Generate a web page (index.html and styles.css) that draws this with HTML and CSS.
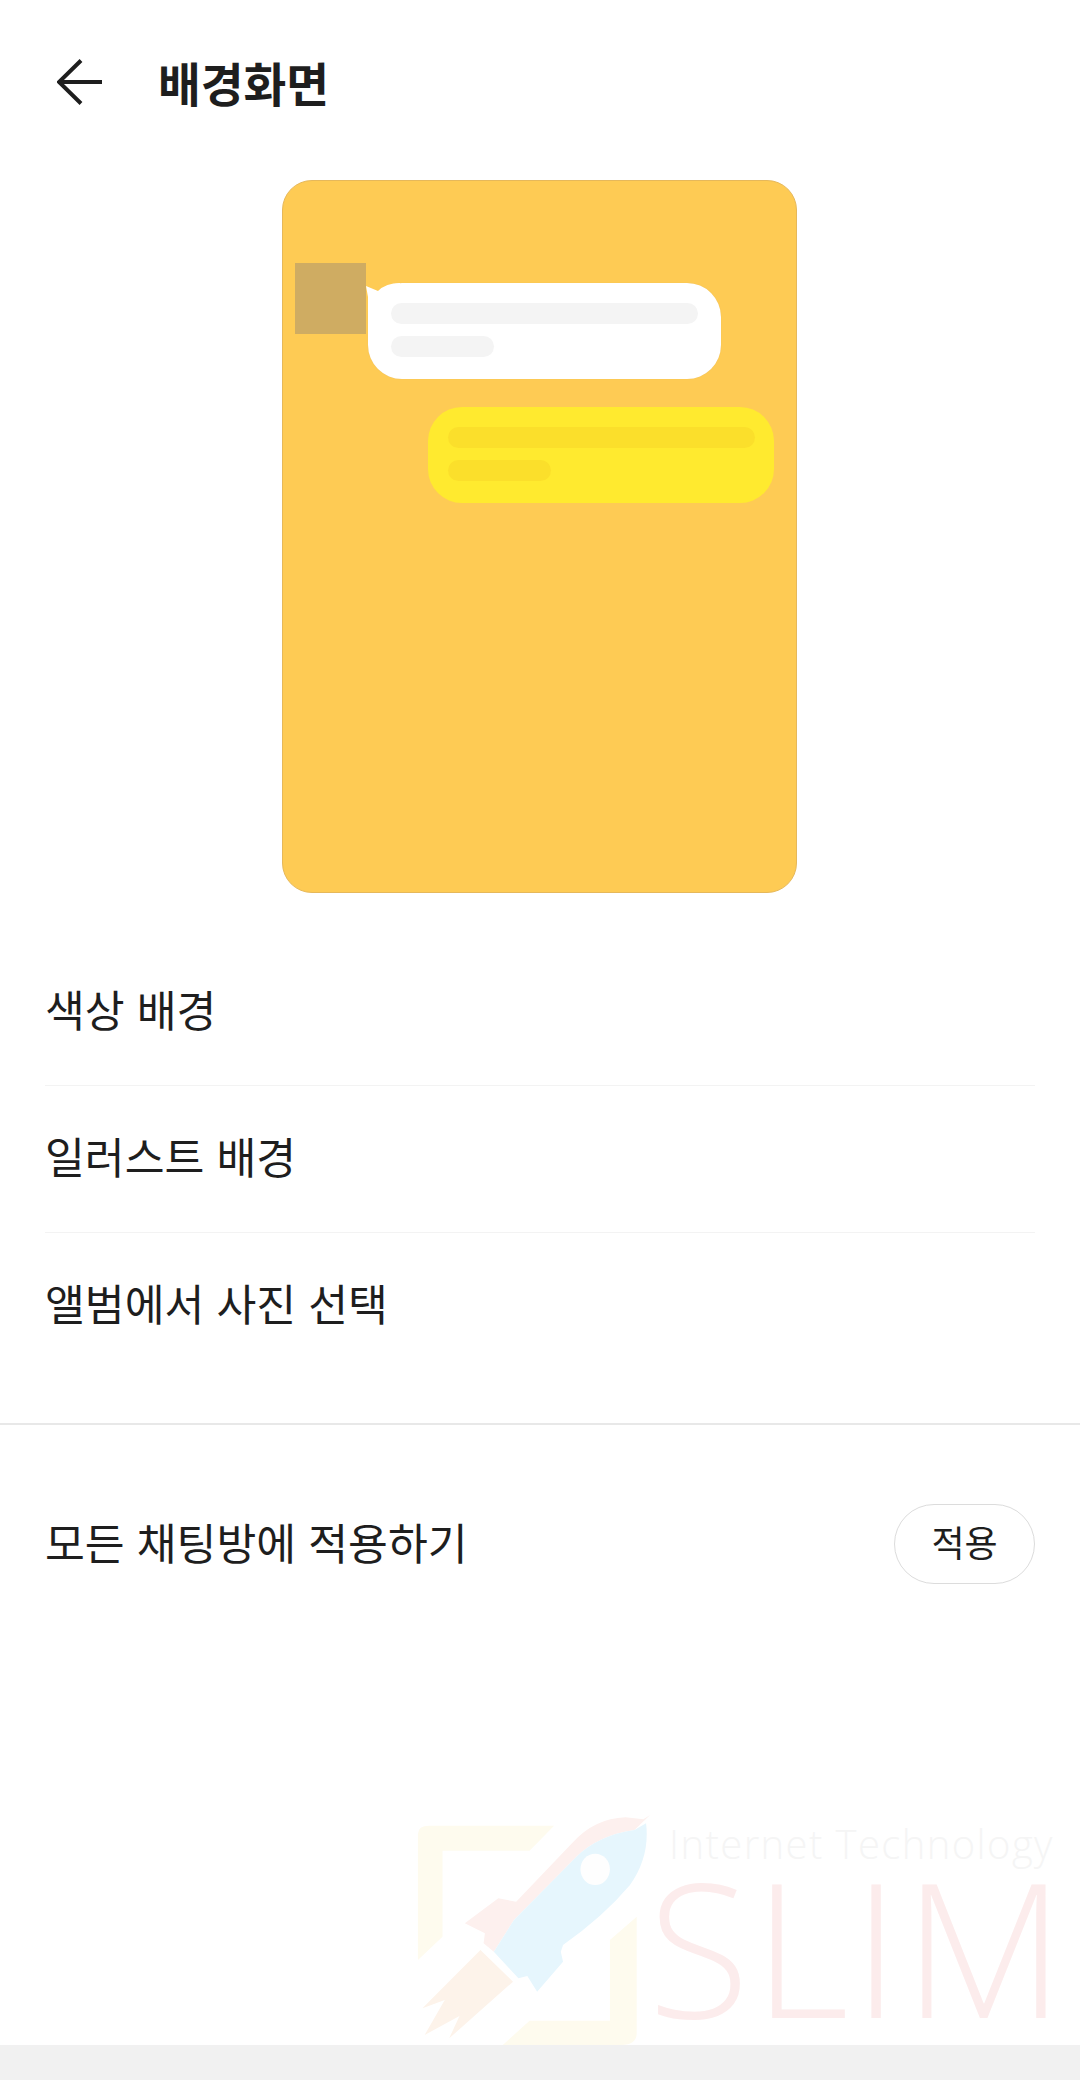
FILE: index.html
```html
<!DOCTYPE html>
<html lang="ko">
<head>
    <meta charset="UTF-8">
    <meta name="viewport" content="width=device-width, initial-scale=1.0">
    <title>배경화면</title>
    <link rel="stylesheet" href="styles.css">
</head>
<body>
    <div class="header">
        <svg class="back-icon" width="46" height="46" viewBox="0 0 46 46">
            <path d="M45 23H2M24 1.500L2 23l22 21.500" fill="none" stroke="#1e1e1e" stroke-width="4"/>
        </svg>
        <h1>배경화면</h1>
    </div>

    <div class="preview">
        <div class="chat-row">
            <div class="avatar"></div>
            <div class="bubble bubble-white">
                <svg class="tail" width="36" height="36" viewBox="0 0 36 36">
                    <path d="M0 3L12 8Q20 0 34 0V36H2V14Z" fill="#fff"/>
                </svg>
                <div class="line line-long"></div>
                <div class="line line-short"></div>
            </div>
        </div>
        <div class="bubble bubble-yellow">
            <div class="line line-long"></div>
            <div class="line line-short"></div>
        </div>
    </div>

    <div class="menu">
        <div class="menu-item">색상 배경</div>
        <div class="menu-item">일러스트 배경</div>
        <div class="menu-item">앨범에서 사진 선택</div>
    </div>

    <div class="apply-row">
        <span>모든 채팅방에 적용하기</span>
        <button type="button">적용</button>
    </div>

    <div class="footer"></div>

    <!-- 워터마크 -->
    <div class="watermark">
        <svg width="700" height="285" viewBox="0 0 1568 855" preserveAspectRatio="none">
            <path d="M85 600V222Q85 197 110 197H390L335 272H140V530Z" fill="#fefbee"/>
            <path d="M575 470V820Q575 855 540 855H275L335 782H515V540Z" fill="#fefbee"/>
            <path d="M225 570L298 665 155 835 178 768 100 825 145 720 95 745Z" fill="#fdf3ea"/>
            <path d="M605 165L570 210Q490 225 440 290L300 480 255 575 232 550 235 520 190 490 265 415 305 425 430 250Q480 175 550 172L590 178Z" fill="#fdf0ee"/>
            <path d="M596 190Q605 290 560 375 500 470 410 555L405 575 410 605 352 695 330 648 310 655 255 575 300 480 440 290Q490 225 570 210Z" fill="#e6f6fd"/>
            <ellipse cx="482" cy="328" rx="33" ry="47" fill="#fefefe"/>
        </svg>
        <div class="wm-sub">Internet Technology</div>
        <div class="wm-name">SLIM</div>
    </div>
</body>
</html>
```

FILE: styles.css
```css
body {
    font-family: "Noto Sans CJK KR", "Noto Sans", sans-serif;
    background-color: #fff;
    color: #1e1e1e;
    margin: 0;
    padding: 0;
    height: 2080px;
    display: flex;
    flex-direction: column;
    position: relative;
    overflow: hidden;
}
.header {
    height: 164px;
    display: flex;
    align-items: center;
    padding-left: 57px;
    gap: 55px;
}
.header h1 {
    margin: 0 0 2px;
    font-size: 46.500px;
    font-weight: 700;
}
.back-icon {
    flex-shrink: 0;
}
.preview {
    box-sizing: border-box;
    width: 515px;
    height: 713px;
    margin: 16px 0 0 282px;
    padding: 82px 12px 0;
    background: #fecb54;
    border: 1px solid #e6b85a;
    border-radius: 30px;
    display: flex;
    flex-direction: column;
}
.chat-row {
    display: flex;
    align-items: flex-start;
    gap: 2px;
}
.avatar {
    width: 71px;
    height: 71px;
    background: #cfac62;
}
.bubble {
    box-sizing: border-box;
    height: 96px;
    padding: 20px 23px;
    border-radius: 34px;
    display: flex;
    flex-direction: column;
    gap: 12px;
}
.bubble-white {
    background: #fff;
    margin-top: 20px;
    width: 353px;
    position: relative;
    box-shadow: 0 0 1px #e6b85a;
}
.bubble-yellow {
    background: #ffea2f;
    margin-top: 28px;
    align-self: flex-end;
    margin-right: 10px;
    width: 346px;
    padding-left: 20px;
    padding-right: 19px;
}
.tail {
    position: absolute;
    left: -2px;
    top: 0;
}
.line {
    position: relative;
    height: 21px;
    border-radius: 11px;
    background: #f4f4f4;
}
.bubble-yellow .line {
    background: #fbdf2b;
}
.line-short {
    width: 103px;
}
.menu {
    margin-top: 46px;
    padding: 0 45px;
}
.menu-item {
    box-sizing: border-box;
    height: 147px;
    padding-bottom: 8px;
    display: flex;
    align-items: center;
    font-size: 43.300px;
    border-bottom: 1px solid #f3f3f3;
}
.menu-item:last-child {
    border-bottom: none;
    height: 190px;
    padding-bottom: 52px;
}
.apply-row {
    border-top: 2px solid #e8e8e8;
    padding: 79px 45px 0;
    display: flex;
    justify-content: space-between;
    align-items: center;
    font-size: 43.300px;
}
.apply-row span {
    padding-bottom: 6px;
}
button {
    width: 141px;
    height: 80px;
    font-family: inherit;
    font-size: 36px;
    color: #1e1e1e;
    background: #fff;
    border: 1px solid #dcdcdc;
    border-radius: 40px;
    padding: 0 0 6px;
}
.footer {
    margin-top: auto;
    height: 35px;
    background: #f1f1f1;
}
.watermark {
    position: absolute;
    left: 380px;
    top: 1760px;
    width: 700px;
    height: 285px;
}
.wm-sub {
    position: absolute;
    left: 289px;
    top: 62px;
    font-family: "Open Sans", sans-serif;
    font-weight: 300;
    font-size: 40px;
    letter-spacing: 1.400px;
    line-height: 44px;
    color: #f5f5f5;
    white-space: nowrap;
}
.wm-name {
    position: absolute;
    left: 268px;
    top: 116px;
    font-family: "Open Sans", sans-serif;
    font-weight: 300;
    font-size: 186px;
    letter-spacing: 4px;
    line-height: 140px;
    color: #fcecec;
    white-space: nowrap;
}
```
